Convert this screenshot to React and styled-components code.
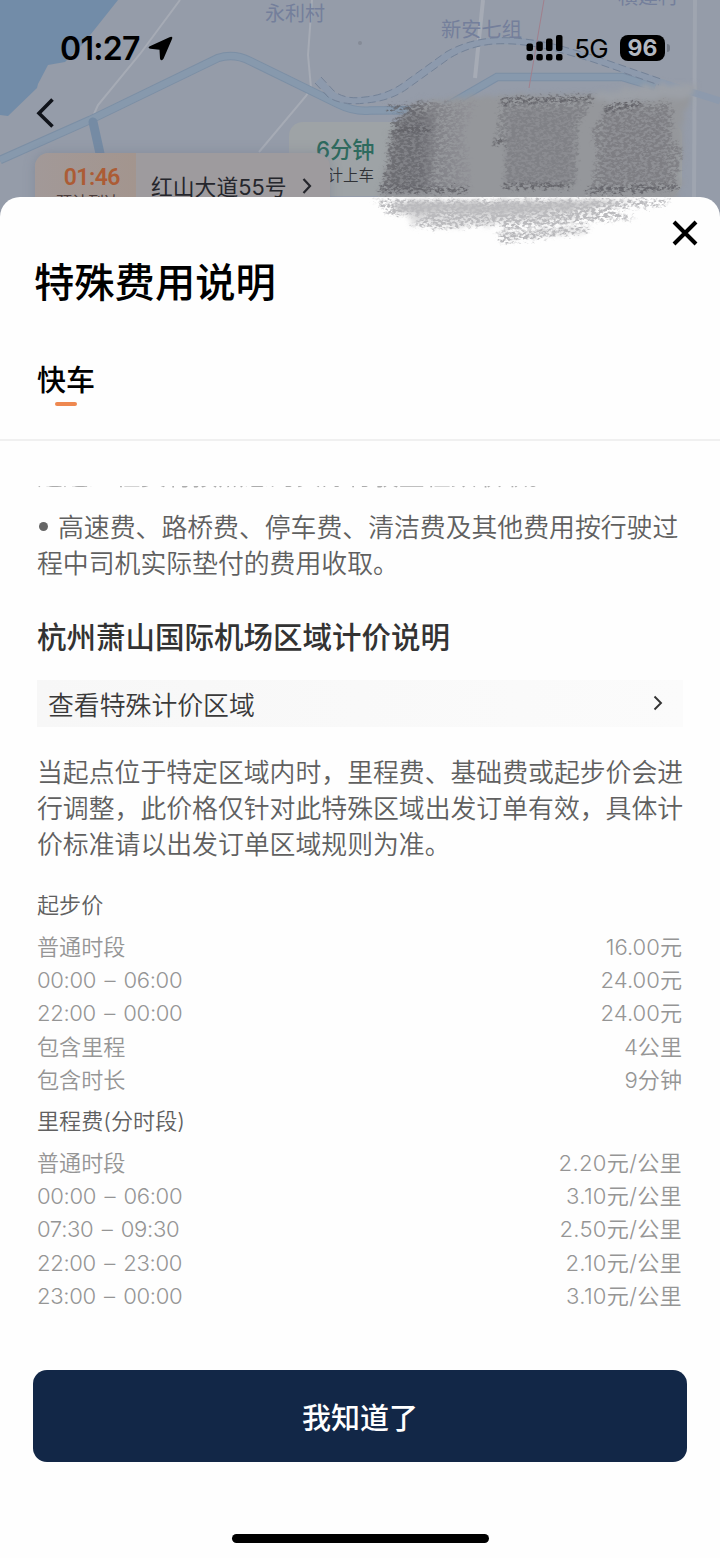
import styled, { createGlobalStyle } from 'styled-components'

const App = () => {
    return (
        <Screen>
            <GlobalStyle />
            <MapView />
            <StatusBar>
                <Clock>
                    01:27
                    <LocationArrow />
                </Clock>
                <StatusRight>
                    <Signal />
                    <Network>5G</Network>
                    <Battery>96</Battery>
                    <BatteryTip />
                </StatusRight>
            </StatusBar>
            <TopNav>
                <svg width="20" height="32" viewBox="0 0 20 32" fill="none" stroke="#10131a" strokeWidth="3.6">
                    <path d="M17.5 2.5 4 16.2 17.5 29.5" />
                </svg>
            </TopNav>
            <Sheet>
                <CloseRow>
                    <svg width="28" height="28" viewBox="0 0 28 28" stroke="#000" strokeWidth="4">
                        <path d="M3 3 25 25M25 3 3 25" />
                    </svg>
                </CloseRow>
                <Title>特殊费用说明</Title>
                <Tabs>
                    <Tab>快车</Tab>
                </Tabs>
                <Content>
                    <ClippedLine>远途过程费将按照您的实际行驶里程数收取。</ClippedLine>
                    <Paragraph>
                        <Bullet />
                        高速费、路桥费、停车费、清洁费及其他费用按行驶过<br />程中司机实际垫付的费用收取。
                    </Paragraph>
                    <SectionTitle>杭州萧山国际机场区域计价说明</SectionTitle>
                    <AreaLink>
                        查看特殊计价区域
                        <svg width="10" height="16" viewBox="0 0 10 16" fill="none" stroke="#333" strokeWidth="1.9">
                            <path d="M1.5 1.5 8 8 1.5 14.5" />
                        </svg>
                    </AreaLink>
                    <Paragraph>
                        当起点位于特定区域内时，里程费、基础费或起步价会进<br />
                        行调整，此价格仅针对此特殊区域出发订单有效，具体计<br />
                        价标准请以出发订单区域规则为准。
                    </Paragraph>
                    <Prices>
                        {groups.map((group) => (
                            <PriceGroup key={group.title}>
                                <GroupTitle>{group.title}</GroupTitle>
                                {group.rows.map(([label, value]) => (
                                    <PriceRow key={label}>
                                        <PriceLabel>{label}</PriceLabel>
                                        <PriceValue>{value}</PriceValue>
                                    </PriceRow>
                                ))}
                            </PriceGroup>
                        ))}
                    </Prices>
                </Content>
                <ConfirmButton>我知道了</ConfirmButton>
                <HomeIndicator />
            </Sheet>
            <Scribble />
        </Screen>
    )
}

const groups = [
    {
        title: '起步价',
        rows: [
            ['普通时段', '16.00元'],
            ['00:00 – 06:00', '24.00元'],
            ['22:00 – 00:00', '24.00元'],
            ['包含里程', '4公里'],
            ['包含时长', '9分钟'],
        ],
    },
    {
        title: '里程费(分时段)',
        rows: [
            ['普通时段', '2.20元/公里'],
            ['00:00 – 06:00', '3.10元/公里'],
            ['07:30 – 09:30', '2.50元/公里'],
            ['22:00 – 23:00', '2.10元/公里'],
            ['23:00 – 00:00', '3.10元/公里'],
        ],
    },
]

const MapView = () => (
    <MapLayer>
        <svg width="720" height="232" viewBox="0 0 720 232" fill="none">
            <path d="M0 0H118L83 44 65 62 48 65 38 84 37 88 8 116 0 115Z" fill="#728ca8" />
            <g stroke="#a6abb5" strokeWidth="2">
                <path d="M180 0 140 54 98 105 94 114" />
                <path d="M312 0 308 55 311 88 306 96 259 152" />
                <path d="M483 0 475 78" strokeWidth="4" />
                <path d="M695 0 694 200" strokeWidth="4" stroke="#9fa5b0" />
            </g>
            <path d="M0 160 90 120 218 58Q234 53 250 61L338 104Q354 112 370 110.500L440 110 497 77H622L655 87" stroke="#7c8fa5" strokeWidth="8.500" />
            <path d="M0 160 90 120 218 58Q234 53 250 61L338 104Q354 112 370 110.500L440 110 497 77H622L655 87" stroke="#8799ad" strokeWidth="6.500" />
            <path d="M93 122 101 158" stroke="#758ba4" strokeWidth="9" strokeLinecap="round" />
            <path d="M318 80 331 94Q343 103 365 100 388 98 405 86L448 55Q468 43 493 41 522 39 560 49L594 59 660 82 720 101" stroke="#8d9aad" strokeWidth="7" />
            <g stroke="#748297" strokeWidth="1" strokeDasharray="8 4">
                <path d="M321 77 334 91Q345 100 365 97 386 95 403 83L446 52Q467 40 493 38 522 36 561 46L595 56 661 79" />
                <path d="M315 83 328 97Q342 106 366 103 390 101 407 89L450 58Q470 46 493 44 522 42 559 52L593 62 659 85" />
            </g>
            <path d="M544 0 529 88" stroke="#a17f8c" />
            <circle cx="360" cy="43" r="2" fill="#858b97" />
        </svg>
        <MapLabel $x={265} $y={0}>永利村</MapLabel>
        <MapLabel $x={441} $y={16} $size={20.300}>新安七组</MapLabel>
        <MapLabel $x={618} $y={-17}>横建村</MapLabel>
        <PickupBubble>
            <PickupTime>6分钟</PickupTime>
            <PickupNote>预计上车</PickupNote>
        </PickupBubble>
        <ArrivalBubble>
            <Arrival>
                <ArrivalTime>01:46</ArrivalTime>
                <ArrivalNote>预计到达</ArrivalNote>
            </Arrival>
            <Destination>
                红山大道55号
                <svg width="10" height="16" viewBox="0 0 10 16" fill="none" stroke="#25262c" strokeWidth="2.200">
                    <path d="M1.500 1 8 8 1.500 15" />
                </svg>
            </Destination>
        </ArrivalBubble>
    </MapLayer>
)

const LocationArrow = () => (
    <svg width="25" height="25" viewBox="0 0 25 25">
        <path d="M1.800 10.200 21.500 1.200Q25.500-.2 23.800 3.600L15.500 22.800Q12.800 26 12 22.500L11.500 13.800 2.500 12.800Q-1 12 1.800 10.200Z" />
    </svg>
)

const Signal = () => (
    <svg width="37" height="26" viewBox="0 0 37 26">
        <rect x="0.500" y="8.500" width="6.500" height="7.500" rx="2" />
        <rect x="10.300" y="6.500" width="6.500" height="9.500" rx="2" />
        <rect x="20" y="3.500" width="6.500" height="12.500" rx="2" />
        <rect x="30" y="0" width="6.500" height="16" rx="2" />
        <rect x="0.500" y="19" width="6.500" height="6.500" rx="2" />
        <rect x="10.300" y="19" width="6.500" height="6.500" rx="2" />
        <rect x="20" y="19" width="6.500" height="6.500" rx="2" />
        <rect x="30" y="19" width="6.500" height="6.500" rx="2" />
    </svg>
)

// pencil smudge that hides the driver card and spills over the sheet
const Scribble = () => (
    <ScribbleLayer width="720" height="250" viewBox="0 0 720 250">
        <defs>
            <filter id="smudge" x="-10%" y="-20%" width="120%" height="140%" colorInterpolationFilters="sRGB">
                <feTurbulence type="fractalNoise" baseFrequency="0.12 0.2" numOctaves="3" seed="4" result="noise" />
                <feDisplacementMap in="SourceGraphic" in2="noise" scale="12" xChannelSelector="R" yChannelSelector="G" result="rough" />
                <feGaussianBlur in="rough" stdDeviation="2.500" />
            </filter>
            <filter id="pencil" x="-10%" y="-20%" width="120%" height="140%" colorInterpolationFilters="sRGB">
                <feTurbulence type="fractalNoise" baseFrequency="0.25 0.4" numOctaves="3" seed="9" result="grain" />
                <feGaussianBlur in="SourceGraphic" stdDeviation="1.500" result="soft" />
                <feDisplacementMap in="soft" in2="grain" scale="12" xChannelSelector="G" yChannelSelector="B" result="rough" />
                <feColorMatrix in="grain" type="matrix" values="0 0 0 0 0  0 0 0 0 0  0 0 0 0 0  5 0 0 0 -1.900" result="mask" />
                <feComposite in="rough" in2="mask" operator="in" />
                <feGaussianBlur stdDeviation="0.500" />
            </filter>
            <linearGradient id="shade" x1="0" x2="1">
                <stop offset="0" stopColor="#67676c" />
                <stop offset="0.400" stopColor="#68686e" />
                <stop offset="0.550" stopColor="#7c7c82" />
                <stop offset="1" stopColor="#94949a" />
            </linearGradient>
            <clipPath id="aboveSheet">
                <rect width="720" height="197" />
            </clipPath>
        </defs>
        <g clipPath="url(#aboveSheet)">
            <g filter="url(#smudge)">
                <path d="M412 103 480 96 590 94 640 86 698 84 684 110 680 190 670 210H378L388 150 390 135Z" fill="#95979b" />
                <path d="M592 94 640 86 698 83 690 98 600 102Z" fill="#9ca0a7" />
                <path d="M396 125 410 110 436 112 430 190H388Z" fill="#818287" />
                <path d="M507 108H585L574 126V184H507Z" fill="#8b8c91" />
                <path d="M604 110H668V184H600Z" fill="#8e8f94" />
            </g>
            <g filter="url(#pencil)" opacity="0.800">
                <path d="M416 102 478 103 464 130 472 190H380L386 165 392 122Z" fill="url(#shade)" />
                <path d="M500 102 592 99 588 110 578 126 576 184 504 186 506 145 496 142Z" fill="#7e7f84" />
                <path d="M612 103 672 103 672 140 682 148 675 186 590 191 597 155 592 130Z" fill="#7b7b80" />
            </g>
            <g filter="url(#pencil)">
                <path d="M502 101 592 98 M503 186H570M588 191 678 187M380 190H468M387 108H412M395 129H430M494 142H505M604 109 640 103" stroke="#626268" strokeWidth="5" />
            </g>
        </g>
        <g filter="url(#smudge)" opacity="0.700">
            <path d="M394 201H640L600 207 520 215 460 215 395 213Z" fill="#aaaaad" />
            <path d="M410 213H605L580 219 440 226 411 223Z" fill="#d0d0d2" />
            <path d="M502 233 590 227 586 232 504 238Z" fill="#d0d0d2" />
        </g>
        <g filter="url(#pencil)">
            <path d="M374 200H670L665 206 610 208 636 219 585 222 505 231 500 223 440 229 412 226 425 215 390 215Z" fill="#bababd" />
            <path d="M497 233 590 226 588 231 500 243Z" fill="#b6b6b9" />
        </g>
    </ScribbleLayer>
)

const GlobalStyle = createGlobalStyle`
  * {
    box-sizing: border-box;
  }

  body {
    margin: 0;
    font-family: Inter, 'Noto Sans CJK SC', sans-serif;
    -webkit-font-smoothing: antialiased;
  }

  svg {
    display: block;
    flex-shrink: 0;
  }
`;

const Screen = styled.div`
  position: relative;
  display: flex;
  flex-direction: column;
  width: 720px;
  height: 1558px;
  background: #959ca9;
  overflow: hidden;
`;

const MapLayer = styled.div`
  position: absolute;
  inset: 0 0 auto 0;
  height: 232px;
  overflow: hidden;
`;

const MapLabel = styled.div`
  position: absolute;
  left: ${(props) => props.$x}px;
  top: ${(props) => props.$y}px;
  font-size: ${(props) => props.$size || 20}px;
  line-height: 28px;
  color: #747f9b;
  white-space: nowrap;
`;

const PickupBubble = styled.div`
  position: absolute;
  left: 289px;
  top: 122px;
  width: 393px;
  height: 74px;
  padding: 12px 0 0 27px;
  border-radius: 14px;
  background: #9ea3a6;
`;

const PickupTime = styled.div`
  font-size: 22.300px;
  font-weight: 500;
  line-height: 31px;
  color: #2e6a5e;
`;

const PickupNote = styled.div`
  margin-left: -4px;
  font-size: 15.500px;
  font-weight: 350;
  line-height: 21px;
  color: #303236;
`;

const ArrivalBubble = styled.div`
  position: absolute;
  left: 35px;
  top: 153px;
  display: flex;
  width: 295px;
  height: 74px;
  border-radius: 14px;
  background: #9e9b9e;
  box-shadow: 0 0 12px rgba(100, 110, 130, 0.35);
  overflow: hidden;
`;

const Arrival = styled.div`
  width: 101px;
  padding: 9px 16px 0 0;
  text-align: right;
  background: linear-gradient(90deg, #a29998, #a3958e);
`;

const ArrivalTime = styled.div`
  font-family: Roboto, sans-serif;
  font-size: 23px;
  line-height: 31px;
  font-weight: 600;
  letter-spacing: -0.500px;
  color: #ac5c35;
`;

const ArrivalNote = styled.div`
  font-size: 16px;
  line-height: 19px;
  color: #4b3c3b;
  white-space: nowrap;
`;

const Destination = styled.div`
  display: flex;
  align-items: center;
  gap: 15px;
  padding-left: 15px;
  height: 65px;
  font-size: 21.800px;
  color: #25262c;
  white-space: nowrap;
`;

const StatusBar = styled.div`
  position: relative;
  display: flex;
  justify-content: space-between;
  align-items: center;
  height: 96px;
  padding: 0 50px 0 60px;
`;

const Clock = styled.div`
  display: flex;
  align-items: center;
  gap: 8px;
  font-size: 32px;
  font-weight: 600;
  letter-spacing: -0.700px;
`;

const StatusRight = styled.div`
  display: flex;
  align-items: center;
`;

const Network = styled.span`
  margin: 0 12px 0 11px;
  font-size: 26px;
  letter-spacing: -0.700px;
`;

const Battery = styled.div`
  width: 45px;
  height: 26px;
  border-radius: 8px;
  background: #000;
  color: #b3b8c1;
  font-size: 23px;
  font-weight: 700;
  line-height: 26px;
  text-align: center;
`;

const BatteryTip = styled.div`
  width: 3px;
  height: 8px;
  margin-left: 2px;
  border-radius: 0 3px 3px 0;
  background: #727985;
`;

const TopNav = styled.div`
  position: relative;
  height: 101px;
  padding: 1px 0 0 35px;
`;

const Sheet = styled.div`
  position: relative;
  display: flex;
  flex-direction: column;
  flex: 1;
  border-radius: 20px 20px 0 0;
  background: #fefefe;
`;

const CloseRow = styled.div`
  display: flex;
  justify-content: flex-end;
  height: 50px;
  padding: 22px 21px 0 0;
`;

const Title = styled.h1`
  margin: 0;
  height: 70px;
  padding-left: 34px;
  font-size: 40.300px;
  font-weight: 500;
  line-height: 71px;
  color: #000;
`;

const Tabs = styled.div`
  display: flex;
  height: 124px;
  padding: 46px 37px 0;
  border-bottom: 2px solid #f0f0f0;
`;

const Tab = styled.div`
  display: flex;
  flex-direction: column;
  align-items: center;
  height: 44px;
  font-size: 29px;
  font-weight: 500;
  line-height: 36px;

  &::after {
    content: '';
    width: 22px;
    height: 4px;
    margin-top: 3px;
    border-radius: 2px;
    background: #ee8850;
  }
`;

const Content = styled.div`
  height: 929px;
  padding: 45px 37px 0;
`;

const ClippedLine = styled.div`
  display: flex;
  align-items: flex-end;
  height: 4px;
  font-size: 25.850px;
  font-weight: 350;
  line-height: 28px;
  color: #777;
  opacity: 0.600;
  overflow: hidden;
  white-space: nowrap;
`;

const Paragraph = styled.p`
  margin: 20px 0 0;
  font-size: 25.850px;
  font-weight: 350;
  line-height: 36px;
  color: #606060;
  white-space: nowrap;
`;

const Bullet = styled.span`
  display: inline-block;
  width: 9px;
  height: 9px;
  margin: 0 10px 6px 2px;
  border-radius: 50%;
  background: #666;
`;

const SectionTitle = styled.h2`
  margin: 35px 0 0;
  font-size: 29.500px;
  font-weight: 500;
  line-height: 40px;
  color: #333;
`;

const AreaLink = styled.div`
  display: flex;
  justify-content: space-between;
  align-items: center;
  height: 47px;
  margin: 23px 0 28px;
  padding: 0 20px 1px 11px;
  background: linear-gradient(90deg, #f7f7f7, #fbfbfb);
  font-size: 25.850px;
  font-weight: 350;
  color: #3a3a3a;
`;

const Prices = styled.div`
  margin-top: 22px;
`;

const PriceGroup = styled.div`
  font-size: 22.100px;
  font-weight: 350;
`;

const GroupTitle = styled.div`
  height: 42px;
  margin-bottom: 8px;
  line-height: 41px;
  color: #606060;
`;

const PriceRow = styled.div`
  display: flex;
  justify-content: space-between;
  height: 33.200px;
  margin-top: -4px;
  margin-bottom: 4px;
  padding-right: 1px;
  line-height: 33.200px;
  color: #959595;
`;

const PriceLabel = styled.span`
  letter-spacing: ${(props) => (/\d/.test(props.children) ? '-0.35px' : '0')};
  word-spacing: 2.500px;
`;

const PriceValue = styled.span`
  letter-spacing: ${(props) => (props.children.includes('/') ? '0.3px' : '0')};
`;

const ConfirmButton = styled.button`
  width: 654px;
  height: 92px;
  margin: 0 auto;
  flex-shrink: 0;
  border: 0;
  border-radius: 14px;
  background: #122747;
  color: #fff;
  font: inherit;
  font-size: 29px;
  font-weight: 500;
`;

const HomeIndicator = styled.div`
  width: 257px;
  height: 9px;
  margin: 72px auto 0;
  border-radius: 5px;
  background: #000;
`;

const ScribbleLayer = styled.svg`
  position: absolute;
  left: 0;
  top: 0;
  pointer-events: none;
`;

export default App;
